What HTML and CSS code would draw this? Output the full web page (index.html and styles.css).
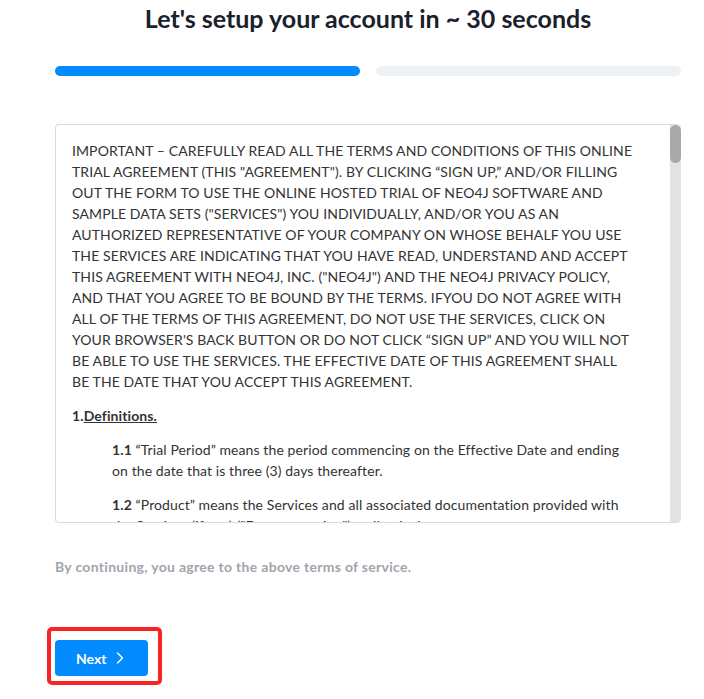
FILE: index.html
```html
<!DOCTYPE html>
<html lang="en">
<head>
<meta charset="utf-8">
<title>Setup your account</title>
<link rel="stylesheet" href="styles.css">
</head>
<body>
<main class="page">
  <h1 class="title">Let's setup your account in ~ 30 seconds</h1>
  <div class="steps">
    <span class="step step-done"></span>
    <span class="step"></span>
  </div>
  <div class="terms">
    <div class="terms-scroll">
      <div class="terms-doc">
        <p>IMPORTANT – CAREFULLY READ ALL THE TERMS AND CONDITIONS OF THIS ONLINE TRIAL AGREEMENT (THIS "AGREEMENT"). BY CLICKING “SIGN UP,” AND/OR FILLING OUT THE FORM TO USE THE ONLINE HOSTED TRIAL OF NEO4J SOFTWARE AND SAMPLE DATA SETS ("SERVICES") YOU INDIVIDUALLY, AND/OR YOU AS AN AUTHORIZED REPRESENTATIVE OF YOUR COMPANY ON WHOSE BEHALF YOU USE THE SERVICES ARE INDICATING THAT YOU HAVE READ, UNDERSTAND AND ACCEPT THIS AGREEMENT WITH NEO4J, INC. ("NEO4J") AND THE NEO4J PRIVACY POLICY, AND THAT YOU AGREE TO BE BOUND BY THE TERMS. IFYOU DO NOT AGREE WITH ALL OF THE TERMS OF THIS AGREEMENT, DO NOT USE THE SERVICES, CLICK ON YOUR BROWSER'S BACK BUTTON OR DO NOT CLICK “SIGN UP” AND YOU WILL NOT BE ABLE TO USE THE SERVICES. THE EFFECTIVE DATE OF THIS AGREEMENT SHALL BE THE DATE THAT YOU ACCEPT THIS AGREEMENT.</p>
        <p class="section"><b>1.<u>Definitions.</u></b></p>
        <p class="clause"><b>1.1</b> “Trial Period” means the period commencing on the Effective Date and ending on the date that is three (3) days thereafter.</p>
        <p class="clause"><b>1.2</b> “Product” means the Services and all associated documentation provided with the Services (if any) ("Documentation"), collectively.</p>
        <p class="clause"><b>1.3</b> “Customer Data” means any data, content or materials that you upload, submit or otherwise make available to the Services during the Trial Period.</p>
        <p class="section"><b>2.<u>License Grant.</u></b></p>
        <p class="clause"><b>2.1</b> Subject to the terms of this Agreement, Neo4j grants you a limited, non-exclusive, non-transferable, non-sublicensable right to access and use the Product during the Trial Period solely for your internal evaluation purposes.</p>
        <p class="clause"><b>2.2</b> You shall not (a) copy, modify or create derivative works of the Product; (b) rent, lease, lend, sell or sublicense the Product; (c) reverse engineer, decompile or disassemble the Product; or (d) use the Product for any production or commercial purpose.</p>
        <p class="section"><b>3.<u>Term and Termination.</u></b></p>
        <p class="clause"><b>3.1</b> This Agreement shall commence on the Effective Date and continue until the end of the Trial Period, unless terminated earlier in accordance with this Agreement.</p>
        <p class="clause"><b>3.2</b> Upon expiration or termination of this Agreement, your right to access and use the Services shall immediately cease and Neo4j may delete any Customer Data.</p>
      </div>
    </div>
    <div class="scroll-track" aria-hidden="true"><span class="scroll-thumb"></span></div>
  </div>
  <p class="agree">By continuing, you agree to the above terms of service.</p>
  <div class="highlight">
    <button class="btn-next" type="button">Next
      <svg class="chev" width="8" height="12" viewBox="0 0 8 12" aria-hidden="true"><path d="M1.5 1 L6.5 6 L1.5 11" fill="none" stroke="currentColor" stroke-width="1.4" stroke-linecap="round" stroke-linejoin="round"/></svg>
    </button>
  </div>
</main>
</body>
</html>
```

FILE: styles.css
```css
html, body {
  margin: 0;
  padding: 0;
  background: #ffffff;
}

body {
  font-family: Lato, "Noto Sans", "Liberation Sans", sans-serif;
  color: #333a45;
}

.page {
  width: 626px;
  padding: 2px 0 0 55px;
}

.title {
  margin: 0;
  font-size: 25px;
  line-height: 32px;
  font-weight: 700;
  text-align: center;
  color: #1a202c;
}

.steps {
  display: flex;
  gap: 16px;
  margin-top: 32px;
}

.step {
  flex: 1;
  height: 10px;
  border-radius: 5px;
  background: #edf2f7;
}

.step-done {
  background: #018bff;
}

.terms {
  display: flex;
  margin-top: 48px;
  height: 397px;
  border: 1px solid #d8dbe2;
  border-right: 0;
  border-radius: 4px;
  overflow: hidden;
}

.terms-scroll {
  flex: 1;
  overflow-y: auto;
  scrollbar-width: none;
  padding: 0 34px 0 16px;
}

.terms-scroll::-webkit-scrollbar {
  display: none;
}

.scroll-track {
  width: 11px;
  flex: none;
  background: #e3e3e3;
  border-radius: 0 4px 4px 0;
}

.scroll-thumb {
  display: block;
  height: 38px;
  border-radius: 6px;
  background: #a9a9a9;
}

.terms-doc {
  padding: 15px 0;
  font-size: 14px;
  line-height: 21px;
  letter-spacing: 0.1px;
  color: #333333;
}

.terms-doc p {
  margin: 0 0 13px;
}

.clause {
  padding-left: 40px;
}

.agree {
  margin: 34px 0 0;
  font-size: 14px;
  line-height: 20px;
  letter-spacing: 0.3px;
  font-weight: 700;
  color: #a0a5ad;
}

.highlight {
  display: inline-flex;
  margin-top: 50px;
  margin-left: -8px;
  padding: 9px 10px 5px 4px;
  border: 4px solid #fa2323;
  border-radius: 5px;
}

.btn-next {
  display: inline-flex;
  align-items: center;
  gap: 10px;
  height: 36px;
  width: 93px;
  padding: 0 0 0 21px;
  border: 0;
  border-radius: 4px;
  background: #018bff;
  color: #ffffff;
  font-family: inherit;
  font-size: 14px;
  font-weight: 700;
}

.chev {
  display: block;
}
```
